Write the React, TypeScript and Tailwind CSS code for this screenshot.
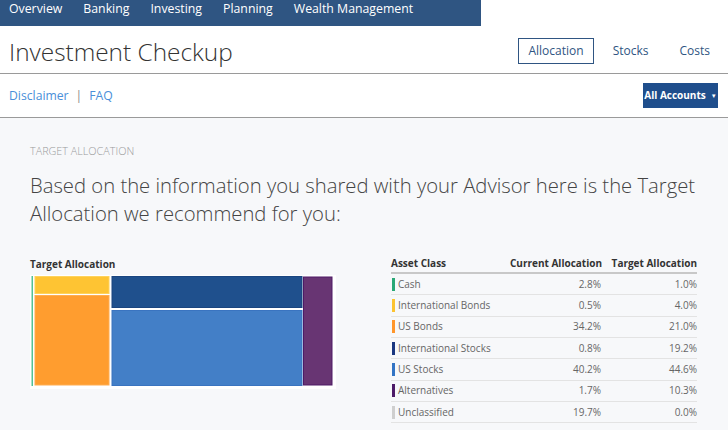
import React from "react";

type Row = {
  name: string;
  color: string;
  current: string;
  target: string;
};

const rows: Row[] = [
  { name: "Cash", color: "bg-[#2aa876]", current: "2.8%", target: "1.0%" },
  { name: "International Bonds", color: "bg-[#fcc331]", current: "0.5%", target: "4.0%" },
  { name: "US Bonds", color: "bg-[#ff962b]", current: "34.2%", target: "21.0%" },
  { name: "International Stocks", color: "bg-[#1a3780]", current: "0.8%", target: "19.2%" },
  { name: "US Stocks", color: "bg-[#3374c4]", current: "40.2%", target: "44.6%" },
  { name: "Alternatives", color: "bg-[#4d1a68]", current: "1.7%", target: "10.3%" },
  { name: "Unclassified", color: "bg-[#cfcfcf]", current: "19.7%", target: "0.0%" },
];

const navItems = ["Overview", "Banking", "Investing", "Planning", "Wealth Management"];

function Treemap() {
  return (
    <svg width="306" height="114" viewBox="0 0 306 114" className="block">
      <rect x="0" y="0" width="306" height="114" fill="#ffffff" />
      <rect x="1.5" y="1" width="1.5" height="110" fill="#52c196" />
      <rect x="5" y="1.5" width="74" height="17" fill="#fec433" stroke="#ffd25a" strokeWidth="1" />
      <rect x="5" y="20.5" width="74" height="89.5" fill="#ff9d2f" stroke="#ffac50" strokeWidth="1" />
      <rect x="82" y="1.5" width="190" height="31" fill="#1f508d" stroke="#1a4580" strokeWidth="1" />
      <rect x="82" y="35.5" width="190" height="75" fill="#437fc7" stroke="#3a74c0" strokeWidth="1" />
      <rect x="273.5" y="2" width="28.5" height="108" fill="#683573" stroke="#4e1a66" strokeWidth="1" />
    </svg>
  );
}

export default function App() {
  return (
    <div className="w-[728px] h-[430px] overflow-hidden bg-white font-['Open_Sans',sans-serif]">
      <nav className="w-[481px] h-[26px] bg-[#2f5582] flex gap-[21px] px-[9px]">
        {navItems.map((item) => (
          <span key={item} className="text-[12.3px] leading-[18px] text-white whitespace-nowrap">
            {item}
          </span>
        ))}
      </nav>

      <header className="h-[48px] border-b border-[#9a9a9a] flex items-center justify-between pl-[9px] pr-[6px]">
        <h1 className="text-[24.4px] font-light text-[#333] leading-none pt-[5px] whitespace-nowrap">
          Investment Checkup
        </h1>
        <div className="flex gap-[7px] text-[12px] text-[#2f5582] pt-[2px]">
          <span className="h-[26px] px-[9px] flex items-center border border-[#2f5582]">
            Allocation
          </span>
          <span className="h-[26px] px-[12px] flex items-center">Stocks</span>
          <span className="h-[26px] px-[12px] flex items-center">Costs</span>
        </div>
      </header>

      <div className="h-[44px] border-b border-[#9a9a9a] flex items-center justify-between pl-[9px] pr-[10px]">
        <div className="text-[12.2px] text-[#4a8fd9] flex items-center pt-[2px]">
          <span>Disclaimer</span>
          <span className="text-[#888] px-[7px]">|</span>
          <span>FAQ</span>
        </div>
        <button className="h-[25px] w-[75px] bg-[#1f4e8c] text-white text-[10px] font-bold flex items-center justify-center gap-[5px] whitespace-nowrap">
          All Accounts
          <span className="text-[6px] leading-none">▼</span>
        </button>
      </div>

      <main className="bg-[#f7f8fa] h-[312px] px-[30px] pt-[26px]">
        <p className="text-[10.8px] leading-[14px] uppercase text-[#9a9a9a] font-light">
          Target Allocation
        </p>
        <h2 className="mt-[13px] text-[20.25px] leading-[28px] font-light text-[#444] w-[668px]">
          Based on the information you shared with your Advisor here is the Target
          Allocation we recommend for you:
        </h2>

        <div className="mt-[26px] flex gap-[55px]">
          <div className="w-[306px] pt-[4px]">
            <p className="text-[10px] leading-[14px] font-bold text-[#333]">
              Target Allocation
            </p>
            <div className="mt-[4px]">
              <Treemap />
            </div>
          </div>

          <div className="w-[306px] pt-[2px]">
            <div className="grid grid-cols-[119px_91px_96px] h-[19px] items-center border-b-2 border-[#c8c8c8] text-[10px] font-bold text-[#333] whitespace-nowrap">
              <span>Asset Class</span>
              <span className="text-right">Current Allocation</span>
              <span className="text-right">Target Allocation</span>
            </div>
            {rows.map((row) => (
              <div
                key={row.name}
                className="grid grid-cols-[119px_91px_96px] h-[21.33px] items-center border-b border-[#e3e3e3] text-[10px] text-[#666] whitespace-nowrap"
              >
                <span className="flex items-center gap-[3px] pl-[1px]">
                  <span className={`w-[3px] h-[13px] ${row.color}`} />
                  {row.name}
                </span>
                <span className="text-right">{row.current}</span>
                <span className="text-right">{row.target}</span>
              </div>
            ))}
          </div>
        </div>
      </main>
    </div>
  );
}
